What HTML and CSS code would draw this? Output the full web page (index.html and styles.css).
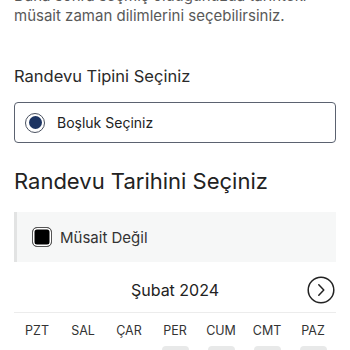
FILE: index.html
```html
<!DOCTYPE html>
<html lang="tr">
<head>
<meta charset="utf-8">
<link rel="stylesheet" href="styles.css">
</head>
<body>
<div class="page">
  <p class="intro">Daha sonra seçmiş olduğunuzda tarihteki müsait zaman dilimlerini seçebilirsiniz.</p>
  <h3 class="label">Randevu Tipini Seçiniz</h3>
  <label class="option">
    <span class="radio"><span class="dot"></span></span>
    <span class="option-text">Boşluk Seçiniz</span>
  </label>
  <h2 class="title">Randevu Tarihini Seçiniz</h2>
  <div class="legend">
    <span class="check"></span>
    <span class="legend-text">Müsait Değil</span>
  </div>
  <div class="calendar">
    <div class="month-row">
      <span class="month">Şubat 2024</span>
      <span class="next">
        <svg width="28" height="28" viewBox="0 0 28 28"><circle cx="14" cy="14" r="12.8" fill="none" stroke="#222" stroke-width="1.5"/><path d="M11.8 8.8 L16.8 14 L11.8 19.2" fill="none" stroke="#222" stroke-width="1.5" stroke-linecap="round" stroke-linejoin="round"/></svg>
      </span>
    </div>
    <div class="weekdays">
      <span>PZT</span><span>SAL</span><span>ÇAR</span><span>PER</span><span>CUM</span><span>CMT</span><span>PAZ</span>
    </div>
    <div class="days">
      <span class="empty"></span><span class="empty"></span><span class="empty"></span>
      <span class="day"></span><span class="day"></span><span class="day"></span><span class="day"></span>
    </div>
  </div>
</div>
</body>
</html>
```
FILE: styles.css
```css
* { box-sizing: border-box; }
html, body { margin: 0; padding: 0; background: #fff; }
body { font-family: Inter, "Noto Sans", sans-serif; color: #222; overflow: hidden; height: 350px; }
.page { padding: 0 14px; }
.intro {
  margin: -14px 0 0;
  font-size: 15px;
  line-height: 20px;
  color: #595959;
}
.label {
  margin: 38px 0 0;
  font-size: 16.5px;
  font-weight: 400;
  line-height: 24px;
  color: #2a2a2a;
}
.option {
  margin-top: 14px;
  height: 41px;
  border: 1px solid #5b6270;
  border-radius: 4px;
  display: flex;
  align-items: center;
  padding-left: 10px;
  gap: 12px;
}
.radio {
  width: 20px; height: 20px;
  border-radius: 50%;
  border: 1.5px solid #4a5160;
  display: flex; align-items: center; justify-content: center;
}
.dot { width: 13px; height: 13px; border-radius: 50%; background: #1c3462; }
.option-text { font-size: 14px; color: #222; }
.title {
  margin: 23px 0 0;
  font-size: 22px;
  font-weight: 400;
  line-height: 30px;
  color: #222;
}
.legend {
  margin-top: 16px;
  height: 50px;
  background: #f6f7f7;
  border-left: 3px solid #e2e3e3;
  display: flex;
  align-items: center;
  padding-left: 15px;
  gap: 8px;
}
.check {
  width: 20px; height: 20px;
  border: 1.5px solid #555;
  border-radius: 5px;
  background: #000;
  box-shadow: inset 0 0 0 1.5px #fff;
}
.legend-text { font-size: 15px; color: #333; }
.calendar { margin-top: 14px; }
.month-row {
  display: flex;
  align-items: center;
  justify-content: center;
  position: relative;
  height: 28px;
}
.month { font-size: 16px; color: #222; }
.next { position: absolute; right: 1px; top: 0; height: 28px; }
.weekdays, .days {
  display: grid;
  grid-template-columns: repeat(7, 1fr);
}
.weekdays {
  margin-top: 8px;
  border-top: 1px solid #ececec;
  padding-top: 10px;
}
.weekdays span { text-align: center; font-size: 12.5px; line-height: 16px; color: #333; }
.days { margin-top: 7px; }
.day { justify-self: center; width: 27px; height: 27px; background: #e8e9e9; border-radius: 4px; }
```
